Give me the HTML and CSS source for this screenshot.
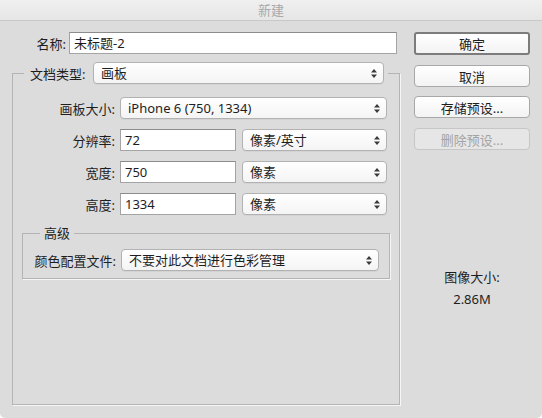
FILE: index.html
```html
<!DOCTYPE html>
<html lang="zh-CN">
<head>
    <meta charset="UTF-8">
    <meta name="viewport" content="width=device-width, initial-scale=1.0">
    <title>新建</title>
    <link rel="stylesheet" href="styles.css">
</head>
<body>
    <div class="dialog">
        <div class="titlebar">新建</div>

        <div class="content">
            <div class="main">
                <div class="name-row">
                    <span class="name-label">名称:</span>
                    <div class="field name-field">未标题-2</div>
                </div>

                <fieldset class="group">
                    <legend class="group-title">
                        <span class="group-label">文档类型:</span>
                        <div class="popup doc-type">画板
                            <svg class="arrows" viewBox="0 0 6 9"><path d="M3 0L6 3.5H0Z M3 9L6 5.5H0Z"/></svg>
                        </div>
                    </legend>

                    <div class="row">
                        <span class="row-label">画板大小:</span>
                        <div class="popup wide">iPhone 6 (750, 1334)
                            <svg class="arrows" viewBox="0 0 6 9"><path d="M3 0L6 3.5H0Z M3 9L6 5.5H0Z"/></svg>
                        </div>
                    </div>
                    <div class="row">
                        <span class="row-label">分辨率:</span>
                        <div class="field short">72</div>
                        <div class="popup unit">像素/英寸
                            <svg class="arrows" viewBox="0 0 6 9"><path d="M3 0L6 3.5H0Z M3 9L6 5.5H0Z"/></svg>
                        </div>
                    </div>
                    <div class="row">
                        <span class="row-label">宽度:</span>
                        <div class="field short">750</div>
                        <div class="popup unit">像素
                            <svg class="arrows" viewBox="0 0 6 9"><path d="M3 0L6 3.5H0Z M3 9L6 5.5H0Z"/></svg>
                        </div>
                    </div>
                    <div class="row">
                        <span class="row-label">高度:</span>
                        <div class="field short">1334</div>
                        <div class="popup unit">像素
                            <svg class="arrows" viewBox="0 0 6 9"><path d="M3 0L6 3.5H0Z M3 9L6 5.5H0Z"/></svg>
                        </div>
                    </div>

                    <!-- advanced options -->
                    <fieldset class="advanced">
                        <legend class="advanced-title">高级</legend>
                        <div class="profile-row">
                            <span class="profile-label">颜色配置文件:</span>
                            <div class="popup profile">不要对此文档进行色彩管理
                                <svg class="arrows" viewBox="0 0 6 9"><path d="M3 0L6 3.5H0Z M3 9L6 5.5H0Z"/></svg>
                            </div>
                        </div>
                    </fieldset>
                </fieldset>
            </div>

            <div class="side">
                <button class="btn default">确定</button>
                <button class="btn cancel">取消</button>
                <button class="btn save">存储预设...</button>
                <button class="btn remove" disabled>删除预设...</button>

                <div class="image-size">
                    <div>图像大小:</div>
                    <div>2.86M</div>
                </div>
            </div>
        </div>
    </div>
</body>
</html>
```

FILE: styles.css
```css
body {
    margin: 0;
    background: #ffffff;
    font-family: "Noto Sans", "Noto Sans CJK SC", sans-serif;
    font-size: 13px;
    color: #1e1e1e;
}
.dialog {
    width: 542px;
    height: 418px;
    background: #dcdcdc;
    border-radius: 0 0 5px 5px;
    display: flex;
    flex-direction: column;
    overflow: hidden;
}
.titlebar {
    height: 20px;
    line-height: 20px;
    text-align: center;
    color: #a9a9a9;
    background: linear-gradient(#f0f0f0, #e6e6e6);
    border-bottom: 1px solid #c8c8c8;
}
.content {
    flex: 1;
    display: flex;
    padding: 11px 0 13px 12px;
}
.main {
    width: 388px;
    display: flex;
    flex-direction: column;
}
.side {
    width: 116px;
    margin-left: 14px;
    display: flex;
    flex-direction: column;
}

/* text inputs and popup menus */
.field {
    box-sizing: border-box;
    height: 22px;
    line-height: 20px;
    padding-left: 4px;
    background: #ffffff;
    border: 1px solid #a4a4a4;
    border-top-color: #8c8c8c;
}
.popup {
    box-sizing: border-box;
    height: 22px;
    line-height: 20px;
    padding: 0 6px 0 7px;
    display: flex;
    align-items: center;
    justify-content: space-between;
    background: linear-gradient(#ffffff, #f4f4f4);
    border: 1px solid #b2b2b2;
    border-radius: 4px;
    box-shadow: 0 1px 0 rgba(0, 0, 0, 0.04);
}
.arrows {
    width: 6px;
    height: 9px;
    fill: #3a3a3a;
}

.name-row {
    display: flex;
    align-items: center;
}
.name-label {
    width: 54px;
    margin-right: 3px;
    text-align: right;
}
.name-field {
    width: 328px;
}

/* document settings box */
.group {
    flex: 1;
    margin: 8px 0 0;
    padding: 13px 0 0;
    min-width: 0;
    border: 1px solid #b4b4b4;
    box-shadow: 1px 1px 0 rgba(255, 255, 255, 0.75);
}
.group-title {
    display: flex;
    align-items: center;
    margin-left: 11px;
    padding: 0 4px 0 6px;
}
.group-label {
    width: 63px;
}
.doc-type {
    width: 291px;
}
.row {
    display: flex;
    align-items: center;
    margin-bottom: 10px;
}
.row-label {
    width: 102px;
    margin-right: 5px;
    text-align: right;
}
.wide {
    width: 267px;
}
.short {
    width: 116px;
}
.unit {
    width: 145px;
    margin-left: 6px;
}

.advanced {
    margin: -1px 9px 0;
    padding: 7px 10px 7px 4px;
    min-width: 0;
    border: 1px solid #b4b4b4;
    box-shadow: 1px 1px 0 rgba(255, 255, 255, 0.75);
}
.advanced-title {
    margin-left: 13px;
    padding: 0 4px;
    line-height: 18px;
}
.profile-row {
    display: flex;
    align-items: center;
}
.profile-label {
    flex: 1;
    margin-right: 5px;
    text-align: right;
}
.profile {
    width: 258px;
}

/* buttons */
.btn {
    box-sizing: border-box;
    height: 22px;
    padding: 0;
    font: inherit;
    color: #1e1e1e;
    background: linear-gradient(#ffffff, #f3f3f3);
    border: 1px solid #a8a8a8;
    border-radius: 4px;
}
.default {
    height: 23px;
    border: 2px solid #7c7c7c;
    border-radius: 3px;
}
.cancel {
    margin-top: 10px;
}
.save {
    margin-top: 9px;
}
.remove {
    margin-top: 10px;
    color: #a4a4a4;
    background: #e6e6e6;
    border-color: #c6c6c6;
}

.image-size {
    margin-top: 116px;
    text-align: center;
    line-height: 22px;
}
```
